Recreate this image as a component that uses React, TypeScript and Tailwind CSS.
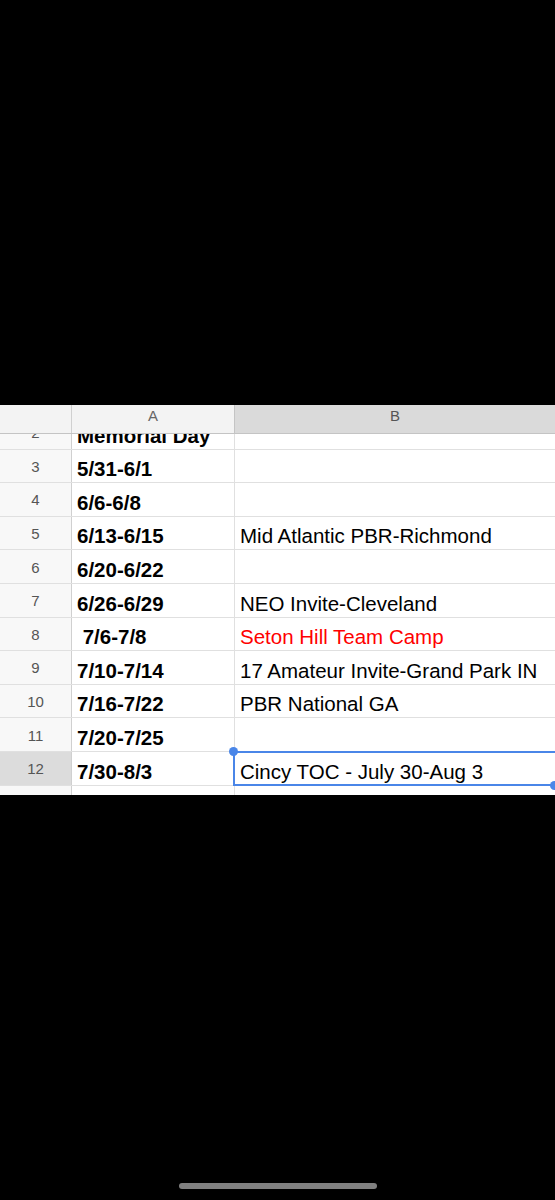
import React from "react";

type Row = { n: number; a: string; b?: string; red?: boolean; hideNum?: boolean };

const rows: Row[] = [
  { n: 2, a: "Memorial Day" },
  { n: 3, a: "5/31-6/1" },
  { n: 4, a: "6/6-6/8" },
  { n: 5, a: "6/13-6/15", b: "Mid Atlantic PBR-Richmond" },
  { n: 6, a: "6/20-6/22" },
  { n: 7, a: "6/26-6/29", b: "NEO Invite-Cleveland" },
  { n: 8, a: "\u00a07/6-7/8", b: "Seton Hill Team Camp", red: true },
  { n: 9, a: "7/10-7/14", b: "17 Amateur Invite-Grand Park IN" },
  { n: 10, a: "7/16-7/22", b: "PBR National GA" },
  { n: 11, a: "7/20-7/25" },
  { n: 12, a: "7/30-8/3", b: "Cincy TOC - July 30-Aug 3" },
  { n: 13, a: "", hideNum: true },
];

export default function App() {
  return (
    <div
      className="w-[555px] h-[1200px] bg-black flex flex-col overflow-hidden"
      style={{ fontFamily: '"Liberation Sans", Arial, sans-serif' }}
    >
      <div className="h-[405px] shrink-0" />
      <div className="h-[390px] shrink-0 bg-white flex flex-col overflow-hidden">
        {/* header */}
        <div className="grid grid-cols-[72px_163px_1fr] h-[29px] shrink-0 border-b border-[#c4c4c4]">
          <div className="bg-[#f3f3f3] border-r border-[#d0d0d0]" />
          <div className="bg-[#f3f3f3] border-r border-[#c4c4c4] flex justify-center items-start pt-[3px] text-[15px] leading-[15px] text-[#666]">
            A
          </div>
          <div className="bg-[#dadada] flex justify-center items-start pt-[3px] text-[15px] leading-[15px] text-[#555]">
            B
          </div>
        </div>
        {/* body */}
        <div className="flex-1 overflow-hidden">
          <div className="-mt-[18px] flex flex-col">
            {rows.map((r) => {
              const sel = r.n === 12;
              return (
                <div
                  key={r.n}
                  className="grid grid-cols-[72px_163px_1fr] h-[33.6px] shrink-0 border-b border-[#e0e0e0]"
                >
                  <div
                    className={`${sel ? "bg-[#dcdcdc]" : "bg-[#f8f8f8]"} border-r border-[#d0d0d0] flex items-center justify-center text-[15px] leading-[15px] text-[#555] pt-[1px]`}
                  >
                    {r.hideNum ? "" : r.n}
                  </div>
                  <div className="border-r border-[#e0e0e0] flex items-end pl-[5px] pb-[3px] text-[20.5px] leading-[20px] font-bold text-black whitespace-pre overflow-hidden">
                    {r.a}
                  </div>
                  <div
                    className={`relative flex items-end pl-[5px] pb-[3px] text-[20.5px] leading-[20px] whitespace-nowrap ${r.red ? "text-[#ff0000]" : "text-black"}`}
                  >
                    {r.b ?? ""}
                    {sel && (
                      <>
                        <div className="absolute -left-[2px] -top-[1px] -right-[2px] -bottom-[1px] border-2 border-[#4a86e8] pointer-events-none" />
                        <div className="absolute -left-[6px] -top-[5px] w-[9px] h-[9px] rounded-full bg-[#4a86e8]" />
                        <div className="absolute -right-[4px] -bottom-[5px] w-[9px] h-[9px] rounded-full bg-[#4a86e8]" />
                      </>
                    )}
                  </div>
                </div>
              );
            })}
          </div>
        </div>
      </div>
      <div className="flex-1 relative">
        <div className="absolute left-[179px] top-[388px] w-[198px] h-[6px] rounded-full bg-[#808080]" />
      </div>
    </div>
  );
}
